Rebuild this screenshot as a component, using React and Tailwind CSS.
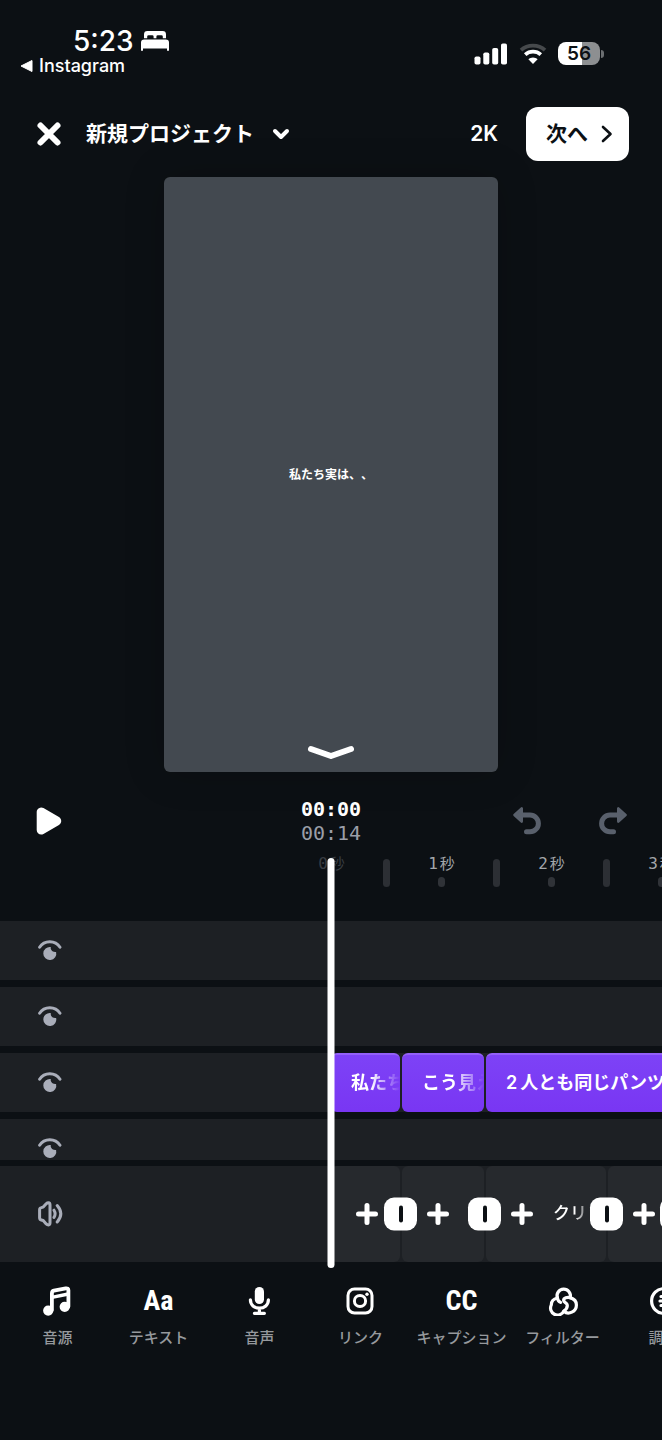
import React from "react";

const iconBase = { fill: "none", stroke: "currentColor", strokeLinecap: "round", strokeLinejoin: "round", "aria-hidden": true };

function BedIcon() {
  return (
    <svg width="30" height="22" viewBox="0 0 30 22" fill="currentColor" aria-hidden="true">
      <path d="M4 8.200V4.400A3.400 3.400 0 0 1 7.400 1h15.200A3.400 3.400 0 0 1 26 4.400V8.200h-3.200V6.600a1.400 1.400 0 0 0-1.400-1.400h-3.600a1.400 1.400 0 0 0-1.400 1.400v1.600h-2.800V6.600a1.400 1.400 0 0 0-1.400-1.400H8.600a1.400 1.400 0 0 0-1.400 1.400v1.600z" />
      <path d="M1 12.600A3.200 3.200 0 0 1 4.200 9.400h21.600a3.200 3.200 0 0 1 3.200 3.200V20a1 1 0 0 1-2 0V18.500H3V20a1 1 0 0 1-2 0z" />
    </svg>
  );
}

function SignalIcon() {
  return (
    <svg width="34" height="22" viewBox="0 0 34 22" fill="currentColor" aria-hidden="true">
      <rect x="0.500" y="13.500" width="6" height="8" rx="1.800" />
      <rect x="9.300" y="9.500" width="6" height="12" rx="1.800" />
      <rect x="18.200" y="5" width="6" height="16.500" rx="1.800" />
      <rect x="27" y="0.500" width="6" height="21" rx="1.800" />
    </svg>
  );
}

function WifiIcon() {
  return (
    <svg width="28" height="22" viewBox="0 0 28 22" fill="none" strokeWidth="3.800" aria-hidden="true">
      <path d="M2 7.200C5.300 4.200 9.400 2.700 14 2.700s8.700 1.500 12 4.500" stroke="#46494c" />
      <path d="M6.200 11.600C8.400 9.700 11 8.700 14 8.700s5.600 1 7.800 2.900" stroke="white" />
      <path d="M14 21l-4.600-4.700c1.200-1.200 2.800-1.900 4.600-1.900s3.400.7 4.600 1.900z" fill="white" />
    </svg>
  );
}

function CloseIcon() {
  return (
    <svg width="26" height="26" viewBox="0 0 26 26" strokeWidth="6" {...iconBase}>
      <path d="M4.500 4.500l17 17M21.500 4.500l-17 17" />
    </svg>
  );
}

function EyeIcon() {
  return (
    <svg width="24" height="24" viewBox="0 0 24 24" aria-hidden="true">
      <path d="M1.600 8.200C3.900 4.600 7.500 2.700 11.800 2.700s7.900 1.900 10.200 5.500" fill="none" stroke="currentColor" strokeWidth="3" strokeLinecap="round" />
      <path d="M12.800 8.100C12.200 10.800 14.400 13.500 18.100 12.900A6.500 6.500 0 1 1 12.800 8.100z" fill="currentColor" />
    </svg>
  );
}

function SpeakerIcon() {
  return (
    <svg width="28" height="28" viewBox="0 0 28 28" strokeWidth="3" {...iconBase}>
      <path d="M2.600 9.800Q2.600 8 4.300 7.600L6.200 7.100L9.200 3.700Q10.200 2.700 11.500 2.700Q13 2.900 13 4.800V22.800Q13 24.700 11.500 24.900Q10.200 24.900 9.200 23.900L6.200 20.500L4.300 20Q2.600 19.600 2.600 17.800Z" />
      <path d="M17 10.200Q19.200 13.800 17 17.400M20.200 5.600Q27.400 13.800 20.200 22" />
    </svg>
  );
}

function UndoIcon() {
  return (
    <svg width="30" height="30" viewBox="0 0 30 30" strokeWidth="5" {...iconBase}>
      <path d="M9 9h9a8.400 8.400 0 0 1 0 16.800h-3.500" />
      <path d="M2.500 9l7.200-6.600v13.200z" fill="currentColor" strokeWidth="2.600" />
    </svg>
  );
}

function MusicIcon() {
  return (
    <svg width="30" height="30" viewBox="0 0 30 30" strokeWidth="3.800" {...iconBase}>
      <path d="M8.900 24V7.400q0-2.200 2-2.700l11.800-2.300q2.700-.4 2.700 1.800V20.500" />
      <path d="M8.900 11.400l16.400-3.400" strokeWidth="3.400" />
      <circle cx="5.200" cy="24.600" r="3.200" fill="currentColor" />
      <circle cx="21.700" cy="20.800" r="3.200" fill="currentColor" />
    </svg>
  );
}

function MicIcon() {
  return (
    <svg width="30" height="30" viewBox="0 0 30 30" strokeWidth="3.200" {...iconBase}>
      <rect x="9.800" y="1" width="9.200" height="17" rx="4.600" fill="currentColor" stroke="none" />
      <path d="M5.400 13.800c0 5.200 4 8.400 9 8.400s9-3.200 9-8.400M14.400 22.500v4.700M9.400 27.300h10" />
    </svg>
  );
}

function LinkIcon() {
  return (
    <svg width="30" height="30" viewBox="0 0 30 30" strokeWidth="3" {...iconBase}>
      <rect x="2" y="3" width="24" height="24" rx="6.500" />
      <circle cx="14" cy="15" r="5.600" />
      <circle cx="21" cy="8.300" r="1.700" fill="currentColor" stroke="none" />
    </svg>
  );
}

function FilterIcon() {
  return (
    <svg width="30" height="30" viewBox="0 0 30 30" strokeWidth="3.200" {...iconBase}>
      <path d="M9.400 12A6.700 6.700 0 1 1 22.200 11.600" />
      <path d="M9.400 12C5.800 12.800 3.300 15.400 3.300 18.900A6.700 6.700 0 0 0 15.800 25.200C20.400 29.200 28.400 25.800 28.400 18.900C28.400 15.500 25.800 12.700 22.200 11.600" />
      <path d="M9.400 12c.3 2 1.400 3.600 3.200 4.400" />
      <path d="M22.200 11.600c-3-.7-6.600.2-6.600 2.700 0 2.400 3.500 2.100 3.700 4.800.2 2.200-1.600 4.700-3.500 6.100" />
    </svg>
  );
}

function AdjustIcon() {
  return (
    <svg width="30" height="30" viewBox="0 0 30 30" strokeWidth="3.200" {...iconBase}>
      <circle cx="15" cy="15" r="12.400" />
      <path d="M12 10.500h1M11 15h2M12 19.500h1M17 4v22" />
    </svg>
  );
}

function PlusIcon() {
  return (
    <svg width="22" height="24" viewBox="0 0 22 24" strokeWidth="5" {...iconBase}>
      <path d="M11 3.500v17M2.500 12h17" />
    </svg>
  );
}

const TextGlyph = ({ children }) => (
  <span className="font-['Roboto_Condensed',Roboto,sans-serif] text-[28px] leading-[30px] font-bold">
    {children}
  </span>
);

const tools = [
  { label: "音源", icon: <MusicIcon /> },
  { label: "テキスト", icon: <TextGlyph>Aa</TextGlyph> },
  { label: "音声", icon: <MicIcon /> },
  { label: "リンク", icon: <LinkIcon /> },
  { label: "キャプション", icon: <TextGlyph>CC</TextGlyph> },
  { label: "フィルター", icon: <FilterIcon /> },
  { label: "調整", icon: <AdjustIcon /> },
];

const captions = [
  { text: "私たち", size: "w-[69px]", mask: "[mask-image:linear-gradient(to_right,black_40%,transparent)]" },
  { text: "こう見え", size: "w-[82px]", mask: "[mask-image:linear-gradient(to_right,black_50%,transparent)]" },
  { count: "2", text: "人とも同じパンツ", size: "w-[240px]", mask: "" },
];

const clips = [
  { size: "w-[69px]" },
  { size: "w-[82px]" },
  { size: "w-[120px]", text: "クリップ" },
  { size: "w-[68px]" },
  { size: "w-[120px]" },
];

function Track({ children, clipped }) {
  return (
    <div className={clipped ? "h-[41px] overflow-hidden bg-[#1d2024]" : "overflow-hidden bg-[#1d2024]"}>
      <div className="flex h-[59px] items-center">
        <div className="w-1/2 shrink-0 pl-[38px]">
          <button type="button" aria-label="表示切り替え" className="block text-[#a9adb9]">
            <EyeIcon />
          </button>
        </div>
        {children}
      </div>
    </div>
  );
}

export default function App() {
  return (
    <main className="flex min-h-screen w-full flex-col overflow-hidden bg-[#0c1014] font-[Inter,'Noto_Sans_CJK_JP',sans-serif] text-white [text-spacing-trim:space-all]">
      <div className="flex h-[107px] justify-between">
        <div className="pt-[26px] pl-5">
          <div className="flex h-[30px] items-center gap-1.5 pl-[53px]">
            <span className="text-[28px] leading-8 font-medium">5:23</span>
            <BedIcon />
          </div>
          <a href="#instagram" className="flex h-5 items-center gap-1.5 text-lg leading-5 font-medium">
            <svg width="13" height="12" viewBox="0 0 13 12" fill="currentColor" aria-hidden="true">
              <path d="M1 6L12 .5v11z" stroke="currentColor" strokeLinejoin="round" />
            </svg>
            Instagram
          </a>
        </div>
        <div className="flex h-[107px] items-center gap-[11px] pr-[58px]">
          <SignalIcon />
          <WifiIcon />
          <div className="flex items-center gap-px">
            <div className="flex h-[23px] w-[42px] items-center justify-center rounded-lg bg-linear-to-r from-white from-56% to-[#8d8f91] to-56% text-[19px] leading-6 font-semibold text-[#0c1014]">
              56
            </div>
            <div className="h-2 w-[3px] rounded-r-full bg-[#6b6e71]" />
          </div>
        </div>
      </div>

      <header className="flex items-center justify-between pr-[33px] pl-9">
        <div className="flex items-center gap-6">
          <button type="button" aria-label="閉じる">
            <CloseIcon />
          </button>
          <button type="button" className="flex items-center gap-[18px] text-[21px] leading-8 font-semibold">
            新規プロジェクト
            <svg width="18" height="14" viewBox="0 0 18 14" strokeWidth="4" {...iconBase}>
              <path d="M3 4l6 6 6-6" />
            </svg>
          </button>
        </div>
        <div className="flex items-center gap-7">
          <button type="button" className="text-[21px] font-semibold">2K</button>
          <button type="button" className="flex h-[54px] items-center gap-[13px] rounded-xl bg-white pr-4 pl-5 text-[21px] font-semibold text-[#0c1014]">
            次へ
            <svg width="12" height="18" viewBox="0 0 12 18" strokeWidth="2.600" {...iconBase}>
              <path d="M2 2l7.500 7L2 16" />
            </svg>
          </button>
        </div>
      </header>

      <section aria-label="プレビュー" className="relative mx-auto mt-4 flex aspect-[334/595] w-[334px] items-center justify-center rounded-md bg-[#434950] shadow-[0_0_40px_rgba(0,0,0,0.2)]">
        <p className="text-xs font-bold">私たち実は、、</p>
        <button type="button" aria-label="プレビューを縮小" className="absolute bottom-3 left-1/2 -translate-x-1/2">
          <svg width="48" height="16" viewBox="0 0 48 16" strokeWidth="6" {...iconBase}>
            <path d="M4 5l20 7 20-7" />
          </svg>
        </button>
      </section>

      <div className="grid h-20 grid-cols-3 items-center px-[34px] pt-[18px]">
        <button type="button" aria-label="再生" className="justify-self-start">
          <svg width="30" height="30" viewBox="0 0 30 30" aria-hidden="true">
            <path d="M7.200 6v18l15.500-9z" fill="white" stroke="white" strokeWidth="9" strokeLinejoin="round" />
          </svg>
        </button>
        <div className="text-center font-['DejaVu_Sans_Mono',monospace] text-xl leading-6">
          <div className="font-bold">00:00</div>
          <div className="text-[#9a9ea8]">00:14</div>
        </div>
        <div className="flex gap-14 justify-self-end text-[#59606c]">
          <button type="button" aria-label="元に戻す">
            <UndoIcon />
          </button>
          <button type="button" aria-label="やり直す" className="-scale-x-100">
            <UndoIcon />
          </button>
        </div>
      </div>

      <section aria-label="タイムライン" className="relative pb-[6px]">
        <div className="flex h-[69px] overflow-hidden pl-[calc(50%-27px)]">
          {[0, 1, 2, 3].map((n) => (
            <React.Fragment key={n}>
              <div className="flex w-[55px] shrink-0 flex-col items-center">
                <span className={n === 0 ? "flex h-6 items-center gap-0.5 text-[15px] text-[#3a3e43]" : "flex h-6 items-center gap-0.5 text-[15px] text-[#a3a6aa]"}>
                  <span className="font-['DejaVu_Sans_Mono',monospace] text-base">{n}</span>
                  <span>秒</span>
                </span>
                {n > 0 && <span className="mt-px h-2.5 w-[7px] rounded-full bg-[#303338]" />}
              </div>
              <div className="flex w-[55px] shrink-0 justify-center">
                <span className="mt-[7px] h-7 w-[7px] rounded-full bg-[#2c2f34]" />
              </div>
            </React.Fragment>
          ))}
        </div>

        <div className="flex flex-col gap-[7px]">
          <Track />
          <Track />
          <Track>
            <div className="flex min-w-0 flex-1 gap-0.5 overflow-hidden">
              {captions.map((c) => (
                <div
                  key={c.text}
                  className={`${c.size} h-[59px] shrink-0 overflow-hidden rounded-md border-t-2 border-[#9360f8] bg-linear-to-b from-[#7d42f6] to-[#7936f3] pl-5`}
                >
                  <div className={`${c.mask} flex gap-[3px] overflow-hidden text-lg leading-[56px] font-semibold whitespace-nowrap`}>
                    {c.count && <span>{c.count}</span>}
                    <span>{c.text}</span>
                  </div>
                </div>
              ))}
            </div>
          </Track>
          <Track clipped />
        </div>

        <div className="mt-[6px] flex h-24 items-center overflow-hidden bg-[#1d2024]">
          <div className="w-1/2 shrink-0 pl-[37px]">
            <button type="button" aria-label="音量" className="block text-[#a9adb9]">
              <SpeakerIcon />
            </button>
          </div>
          <div className="flex h-full gap-0.5">
            {clips.map((c, i) => (
              <div key={i} className={`${c.size} relative flex h-full shrink-0 items-center gap-5 rounded-md bg-[#26292d] pl-[25px]`}>
                <button type="button" aria-label="クリップを追加" className="shrink-0">
                  <PlusIcon />
                </button>
                {c.text && (
                  <span className="min-w-0 overflow-hidden text-[17px] font-medium whitespace-nowrap [mask-image:linear-gradient(to_right,black_40%,transparent_75%)]">
                    {c.text}
                  </span>
                )}
                <button
                  type="button"
                  aria-label="切り替え効果"
                  className="absolute top-1/2 -right-[17px] z-10 flex size-[33px] -translate-y-1/2 items-center justify-center rounded-[10px] bg-white"
                >
                  <span className="h-[17px] w-1 rounded-full bg-[#0c1014]" />
                </button>
              </div>
            ))}
          </div>
        </div>

        <div className="absolute top-[6px] bottom-0 left-1/2 z-20 w-[7px] -translate-x-1/2 rounded-full bg-white" />
      </section>

      <nav aria-label="ツール" className="flex overflow-hidden pt-[18px] pl-[7px]">
        {tools.map((t) => (
          <button key={t.label} type="button" className="flex w-[101px] shrink-0 flex-col items-center gap-2.5">
            <span className="flex h-[30px] items-center">{t.icon}</span>
            <span className="text-[15px] leading-6 font-medium whitespace-nowrap text-[#96999d]">{t.label}</span>
          </button>
        ))}
      </nav>
    </main>
  );
}
